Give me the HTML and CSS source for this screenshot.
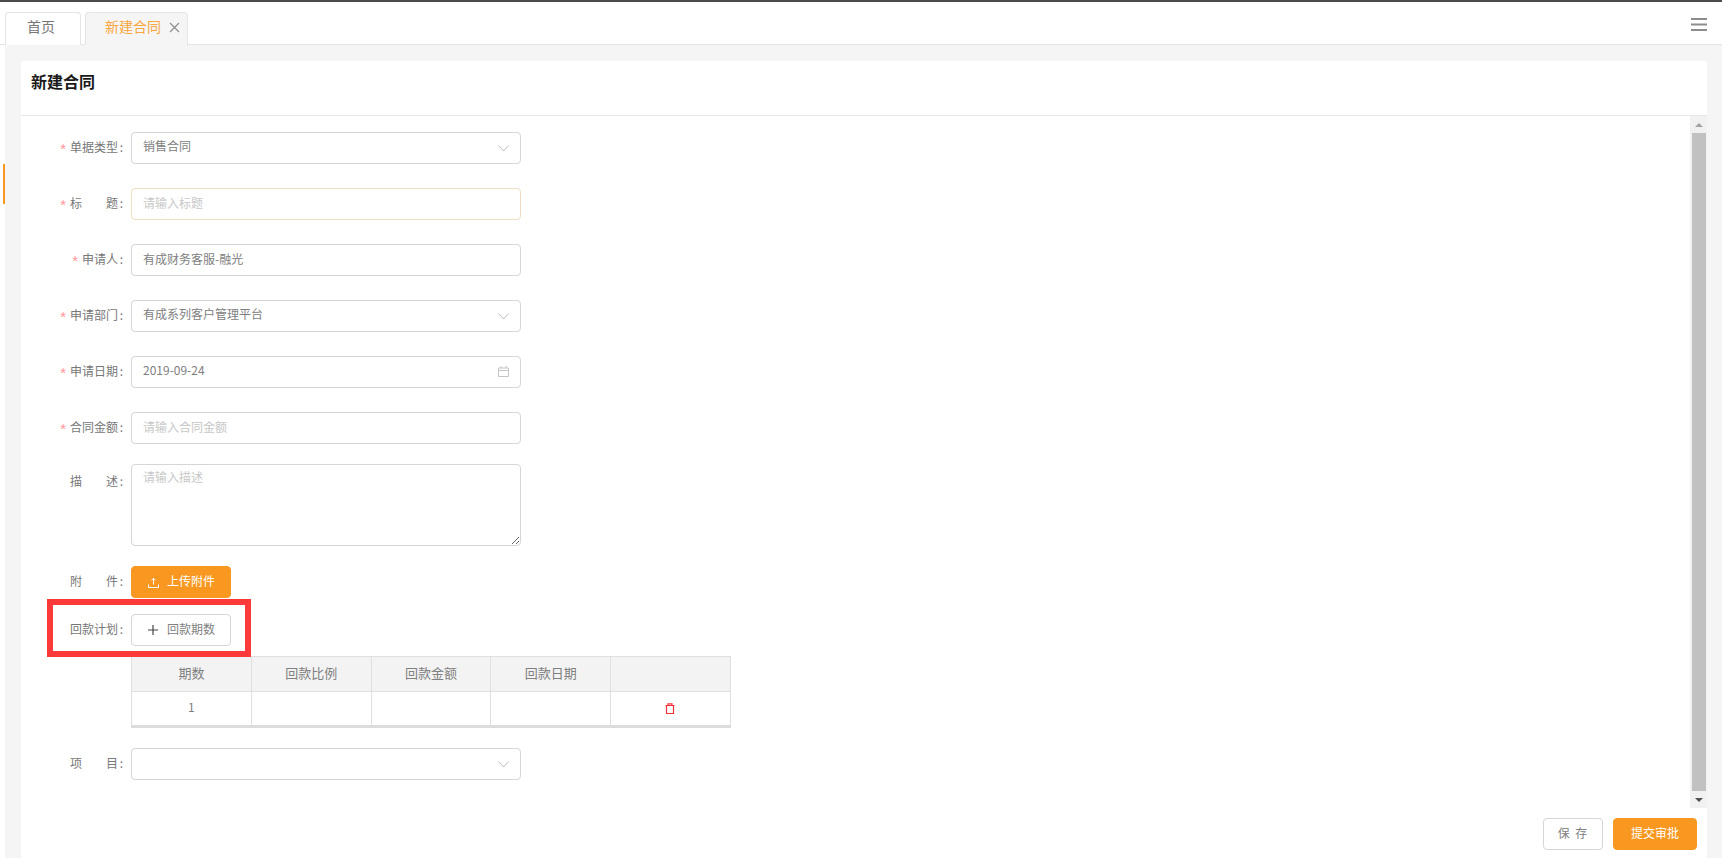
FILE: index.html
```html
<!DOCTYPE html>
<html lang="zh-CN">
<head>
<meta charset="utf-8">
<title>新建合同</title>
<link rel="stylesheet" href="styles.css">
</head>
<body>
<div class="app">
  <i class="side-mark"></i>
  <header class="tabbar">
    <div class="tab">首页</div>
    <div class="tab tab-active">新建合同
      <svg class="tab-x" width="11" height="11" viewBox="0 0 11 11"><path d="M1 1l9 9M10 1l-9 9" fill="none" stroke="#8f8f8f" stroke-width="1.2"/></svg>
    </div>
    <svg class="menu" width="16" height="13" viewBox="0 0 16 13"><path d="M0 1h16M0 6.500h16M0 12h16" fill="none" stroke="#8c8c8c" stroke-width="2"/></svg>
  </header>
  <main class="main">
    <section class="card">
      <h1 class="card-title">新建合同</h1>
      <div class="card-body">
        <form class="form">
          <div class="row">
            <div class="label"><span class="star">*</span><span>单据类型</span><span class="colon">:</span></div>
            <div class="control select">销售合同
              <svg class="chev" width="11" height="7" viewBox="0 0 11 7"><path d="M.5.500l5 5.500 5-5.500" fill="none" stroke="#bdbdbd"/></svg>
            </div>
          </div>
          <div class="row">
            <div class="label"><span class="star">*</span><span class="wide">标题</span><span class="colon">:</span></div>
            <input class="control input input-focus" placeholder="请输入标题">
          </div>
          <div class="row">
            <div class="label"><span class="star">*</span><span>申请人</span><span class="colon">:</span></div>
            <input class="control input" value="有成财务客服-融光">
          </div>
          <div class="row">
            <div class="label"><span class="star">*</span><span>申请部门</span><span class="colon">:</span></div>
            <div class="control select">有成系列客户管理平台
              <svg class="chev" width="11" height="7" viewBox="0 0 11 7"><path d="M.5.500l5 5.500 5-5.500" fill="none" stroke="#bdbdbd"/></svg>
            </div>
          </div>
          <div class="row">
            <div class="label"><span class="star">*</span><span>申请日期</span><span class="colon">:</span></div>
            <div class="control select">2019-09-24
              <svg class="cal" width="11" height="11" viewBox="0 0 11 11"><path d="M.5 2h10v8.500H.5zM.5 4.500h10M3 0v2M8 0v2" fill="none" stroke="#c4c4c4"/></svg>
            </div>
          </div>
          <div class="row row-last">
            <div class="label"><span class="star">*</span><span>合同金额</span><span class="colon">:</span></div>
            <input class="control input" placeholder="请输入合同金额">
          </div>
          <div class="row row-area">
            <div class="label label-area"><span class="wide">描述</span><span class="colon">:</span></div>
            <textarea class="control area" placeholder="请输入描述"></textarea>
          </div>
          <div class="row row-upload">
            <div class="label"><span class="wide">附件</span><span class="colon">:</span></div>
            <button type="button" class="btn btn-primary btn-wide">
              <svg width="11" height="11" viewBox="0 0 11 11"><path d="M5.500 7.500V1.500M3.500 3.300l2-2 2 2M.5 7.500v3h10v-3" fill="none" stroke="#fff"/></svg>
              <span>上传附件</span>
            </button>
          </div>
          <div class="row row-plan">
            <div class="label"><span>回款计划</span><span class="colon">:</span></div>
            <button type="button" class="btn btn-wide btn-outline">
              <svg width="10" height="10" viewBox="0 0 10 10"><path d="M5 0v10M0 5h10" fill="none" stroke="#444" stroke-width="1.200"/></svg>
              <span>回款期数</span>
            </button>
            <div class="highlight"></div>
          </div>
          <table class="plan">
            <thead>
              <tr><th>期数</th><th>回款比例</th><th>回款金额</th><th>回款日期</th><th></th></tr>
            </thead>
            <tbody>
              <tr>
                <td>1</td><td></td><td></td><td></td>
                <td><svg class="trash" width="10" height="11" viewBox="0 0 10 11"><path d="M1.500 2.500h7V10.500h-7zM.5 2.500h9M3 2.500V.8h4v1.700" fill="none" stroke="#f5313a" stroke-width="1.200"/></svg></td>
              </tr>
            </tbody>
          </table>
          <div class="row">
            <div class="label"><span class="wide">项目</span><span class="colon">:</span></div>
            <div class="control select">
              <svg class="chev" width="11" height="7" viewBox="0 0 11 7"><path d="M.5.500l5 5.500 5-5.500" fill="none" stroke="#bdbdbd"/></svg>
            </div>
          </div>
        </form>
        <div class="scrollbar">
          <div class="sb-btn"><i class="arrow-up"></i></div>
          <div class="sb-track"><div class="sb-thumb"></div></div>
          <div class="sb-btn"><i class="arrow-down"></i></div>
        </div>
      </div>
      <footer class="card-foot">
        <button type="button" class="foot-btn foot-save">保 存</button>
        <button type="button" class="foot-btn foot-submit">提交审批</button>
      </footer>
    </section>
  </main>
</div>
</body>
</html>
```

FILE: styles.css
```css
* { box-sizing: border-box; }
html, body { margin: 0; padding: 0; background: #fff; }
body, input, textarea, button {
  font-family: "Noto Sans CJK SC", "Noto Sans", sans-serif;
}
.app {
  position: relative;
  width: 1722px;
  height: 858px;
  display: flex;
  flex-direction: column;
  overflow: hidden;
  border-top: 2px solid #4a4a4a;
}
.side-mark {
  position: absolute;
  left: 3px;
  top: 162px;
  width: 2px;
  height: 40px;
  background: #f99820;
}
.tabbar {
  height: 43px;
  flex: none;
  display: flex;
  align-items: flex-start;
  gap: 4px;
  padding: 10px 15px 0 5px;
  border-bottom: 1px solid #e6e6e6;
}
.tab {
  width: 76px;
  height: 33px;
  padding-left: 21px;
  font-size: 14px;
  line-height: 27px;
  color: #777;
  background: #fff;
  border: 1px solid #e4e4e4;
  border-bottom: 0;
  border-radius: 4px 4px 0 0;
  position: relative;
}
.tab-active {
  width: 103px;
  padding-left: 19px;
  color: #f9a63f;
  background: #f5f5f5;
  display: flex;
  align-items: flex-start;
  gap: 8px;
}
.tab-x { margin-top: 9px; }
.menu { margin: 6px 0 0 auto; }
.main {
  flex: 1;
  min-height: 0;
  margin-left: 5px;
  padding: 16px 15px 0 16px;
  background: #f5f5f5;
  display: flex;
}
.card {
  flex: 1;
  min-width: 0;
  background: #fff;
  display: flex;
  flex-direction: column;
}
.card-title {
  margin: 0;
  height: 55px;
  flex: none;
  padding-left: 10px;
  font-size: 16px;
  font-weight: 700;
  line-height: 41px;
  color: #1a1a1a;
  border-bottom: 1px solid #e8e8e8;
}
.card-body {
  height: 692px;
  flex: none;
  display: flex;
  overflow: hidden;
}
.form {
  flex: 1;
  min-width: 0;
  padding-top: 16px;
}
.row {
  position: relative;
  display: flex;
  align-items: flex-start;
  gap: 8px;
  margin-bottom: 24px;
}
.row-last { margin-bottom: 20px; }
.row-area { margin-bottom: 20px; }
.row-upload { margin-bottom: 16px; }
.row-plan { margin-bottom: 10px; }
.label {
  width: 102px;
  height: 32px;
  flex: none;
  display: flex;
  justify-content: flex-end;
  align-items: center;
  padding-bottom: 3px;
  font-size: 12px;
  color: #777;
}
.label-area { height: 36px; }
.star {
  color: #f99;
  margin-right: 4px;
  font-family: "Liberation Sans", sans-serif;
  font-size: 15px;
  line-height: 12px;
  padding-top: 4px;
}
.wide { width: 48px; text-align: justify; text-align-last: justify; }
.colon { width: 5px; text-align: right; }
.control {
  width: 390px;
  height: 32px;
  flex: none;
  border: 1px solid #d6d6d6;
  border-radius: 4px;
  background: #fff;
  font-size: 12px;
  color: #808080;
  padding: 0 11px;
  outline: none;
}
.input { padding-bottom: 3px; }
.select {
  position: relative;
  line-height: 26px;
}
.chev { position: absolute; right: 11px; top: 12px; }
.cal { position: absolute; right: 11px; top: 9px; }
.input-focus { border-color: #efdcc3; }
.input::placeholder, .area::placeholder { color: #c8c8c8; opacity: 1; }
.area {
  display: block;
  height: 82px;
  padding: 3px 11px;
  line-height: 18px;
  resize: vertical;
}
.btn {
  height: 32px;
  display: flex;
  align-items: center;
  gap: 8px;
  padding: 0 0 0 16px;
  font-size: 12px;
  border-radius: 4px;
  border: 1px solid #d6d6d6;
  background: #fff;
  color: #808080;
}
.btn span { padding-bottom: 3px; }
.btn-wide { width: 100px; }
.btn-primary { background: #f99820; border-color: #f99820; color: #fff; }
.btn-outline { padding-left: 16px; gap: 9px; }
.highlight {
  position: absolute;
  left: 26px;
  top: -15px;
  width: 204px;
  height: 58px;
  border: 6.500px solid #fd3a3a;
  pointer-events: none;
}
.plan {
  width: 600px;
  margin: 0 0 20px 110px;
  border-collapse: collapse;
  table-layout: fixed;
  border-bottom: 3px solid #dcdcdc;
}
.plan th, .plan td {
  height: 35px;
  padding: 0 0 3px;
  border: 1px solid #e0e0e0;
  text-align: center;
  color: #808080;
}
.plan th { background: #f3f3f3; font-size: 13px; font-weight: 400; }
.plan td { font-size: 12px; padding-bottom: 5px; }
.plan tbody tr:last-child td { border-bottom: 0; }
.trash { display: block; margin: 5px auto 0; position: relative; left: -1px; }
.scrollbar {
  width: 17px;
  flex: none;
  display: flex;
  flex-direction: column;
  background: #f1f1f1;
}
.sb-btn {
  height: 17px;
  flex: none;
  display: flex;
  align-items: center;
  justify-content: center;
}
.arrow-up, .arrow-down {
  width: 0;
  height: 0;
  border-left: 4px solid transparent;
  border-right: 4px solid transparent;
}
.arrow-up { border-bottom: 4px solid #a3a3a3; }
.arrow-down { border-top: 4px solid #505050; }
.sb-track { flex: 1; padding: 0 1px 0 2px; display: flex; }
.sb-thumb { flex: 1; background: #c1c1c1; }
.card-foot {
  flex: 1;
  display: flex;
  justify-content: flex-end;
  gap: 10px;
  padding: 10px 10px 0 0;
}
.foot-btn {
  height: 32px;
  padding: 0 0 3px;
  font-size: 12px;
  border-radius: 4px;
  border: 1px solid #d6d6d6;
}
.foot-save { width: 60px; background: #fff; color: #808080; letter-spacing: 1px; word-spacing: 1px; }
.foot-submit { width: 84px; background: #f99820; border-color: #f99820; color: #fff; }
```
